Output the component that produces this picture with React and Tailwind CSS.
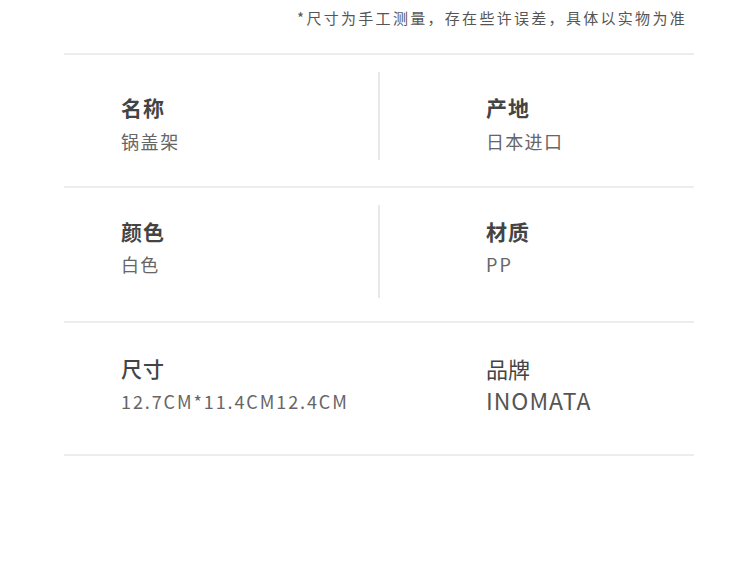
const font = { fontFamily: '"Noto Sans CJK SC", "Noto Sans", sans-serif' };

function Line() {
  return <div className="h-[2px] w-[630px] bg-[#ededed]" />;
}

function Divider({ h }) {
  return <div className={`w-[2px] bg-[#e8e8e8] mt-[17px] self-start ${h}`} />;
}

export default function App() {
  return (
    <div className="w-[750px] h-[588px] bg-white text-[#444]" style={font}>
      <div className="flex justify-end pr-[63px] pt-[6px] h-[53px]">
        <p className="text-[15px] leading-6 tracking-[2.3px] text-[#555]">
          *尺寸为手工测量，存在些许误差，具体以实物为准
        </p>
      </div>

      <div className="ml-[64px] flex flex-col">
        <Line />
        {/* 名称 / 产地 */}
        <div className="flex h-[131px]">
          <div className="w-[314px] pl-[57px] pt-[38px]">
            <p className="text-[21px] leading-7 font-bold tracking-[1px]">名称</p>
            <p className="mt-[8px] text-[18px] leading-6 tracking-[1.6px] text-[#666]">锅盖架</p>
          </div>
          <Divider h="h-[88px]" />
          <div className="pl-[106px] pt-[38px]">
            <p className="text-[21px] leading-7 font-bold tracking-[1px]">产地</p>
            <p className="mt-[8px] text-[18px] leading-6 tracking-[1.3px] text-[#666]">日本进口</p>
          </div>
        </div>
        <Line />
        {/* 颜色 / 材质 */}
        <div className="flex h-[133px]">
          <div className="w-[314px] pl-[57px] pt-[29px]">
            <p className="text-[21px] leading-7 font-bold tracking-[1px]">颜色</p>
            <p className="mt-[7px] text-[18px] leading-6 tracking-[1.3px] text-[#666]">白色</p>
          </div>
          <Divider h="h-[93px]" />
          <div className="pl-[106px] pt-[29px]">
            <p className="text-[21px] leading-7 font-bold tracking-[1px]">材质</p>
            <p className="mt-[7px] text-[18px] leading-6 tracking-[2px] text-[#666]">PP</p>
          </div>
        </div>
        <Line />
        {/* 尺寸 / 品牌 */}
        <div className="flex h-[131px]">
          <div className="w-[316px] pl-[57px] pt-[31px]">
            <p className="text-[21px] leading-7 font-medium tracking-[1px]">尺寸</p>
            <p className="mt-[7px] text-[18px] leading-6 tracking-[1.9px] text-[#666]">12.7CM*11.4CM12.4CM</p>
          </div>
          <div className="pl-[106px] pt-[31px]">
            <p className="text-[22px] leading-7">品牌</p>
            <p className="mt-[4px] text-[23px] leading-7 tracking-[1px] text-[#555]">INOMATA</p>
          </div>
        </div>
        <Line />
      </div>
    </div>
  );
}
